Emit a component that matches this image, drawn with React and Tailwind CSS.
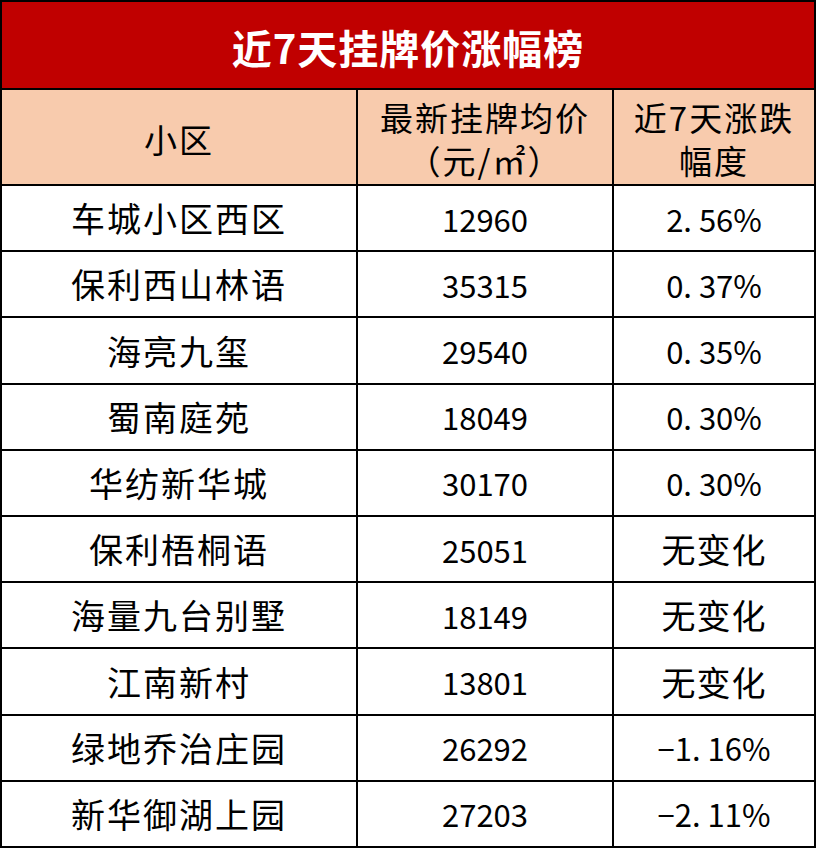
const rows = [
  { name: '车城小区西区', price: '12960', change: '2. 56%' },
  { name: '保利西山林语', price: '35315', change: '0. 37%' },
  { name: '海亮九玺', price: '29540', change: '0. 35%' },
  { name: '蜀南庭苑', price: '18049', change: '0. 30%' },
  { name: '华纺新华城', price: '30170', change: '0. 30%' },
  { name: '保利梧桐语', price: '25051', change: '无变化' },
  { name: '海量九台别墅', price: '18149', change: '无变化' },
  { name: '江南新村', price: '13801', change: '无变化' },
  { name: '绿地乔治庄园', price: '26292', change: '−1. 16%' },
  { name: '新华御湖上园', price: '27203', change: '−2. 11%' },
]

export default function App() {
  return (
    <div className="w-[816px] h-[848px] bg-white border-2 border-black flex flex-col font-['Noto_Sans_CJK_SC',sans-serif] text-black">
      {/* Title */}
      <div className="h-[88px] shrink-0 bg-[#c00000] border-b-2 border-black flex items-center justify-center pt-1">
        <h1 className="text-white font-bold text-[40px] tracking-[1px] leading-none">近7天挂牌价涨幅榜</h1>
      </div>

      {/* Header */}
      <div className="h-[96px] shrink-0 grid grid-cols-[356px_256px_1fr] bg-[#f8cbad] border-b-2 border-black text-[33px] leading-none tracking-[2px]">
        <div className="border-r-2 border-black flex items-center justify-center pt-1">小区</div>
        <div className="border-r-2 border-black flex flex-col items-center justify-center gap-[10px] pt-1">
          <span>最新挂牌均价</span>
          <span>（元/㎡）</span>
        </div>
        <div className="flex flex-col items-center justify-center gap-[10px] pt-1">
          <span>近7天涨跌</span>
          <span>幅度</span>
        </div>
      </div>

      {/* Rows */}
      {rows.map((r, i) => (
        <div
          key={r.name}
          className={`flex-1 grid grid-cols-[356px_256px_1fr] text-[34px] leading-none ${i < rows.length - 1 ? 'border-b-2 border-black' : ''}`}
        >
          <div className="border-r-2 border-black flex items-center justify-center tracking-[2px]">{r.name}</div>
          <div className="border-r-2 border-black flex items-center justify-center text-[31px]">{r.price}</div>
          <div className={`flex items-center justify-center ${r.change === '无变化' ? 'text-[34px] tracking-[1px]' : 'text-[31px]'}`}>{r.change}</div>
        </div>
      ))}
    </div>
  )
}
